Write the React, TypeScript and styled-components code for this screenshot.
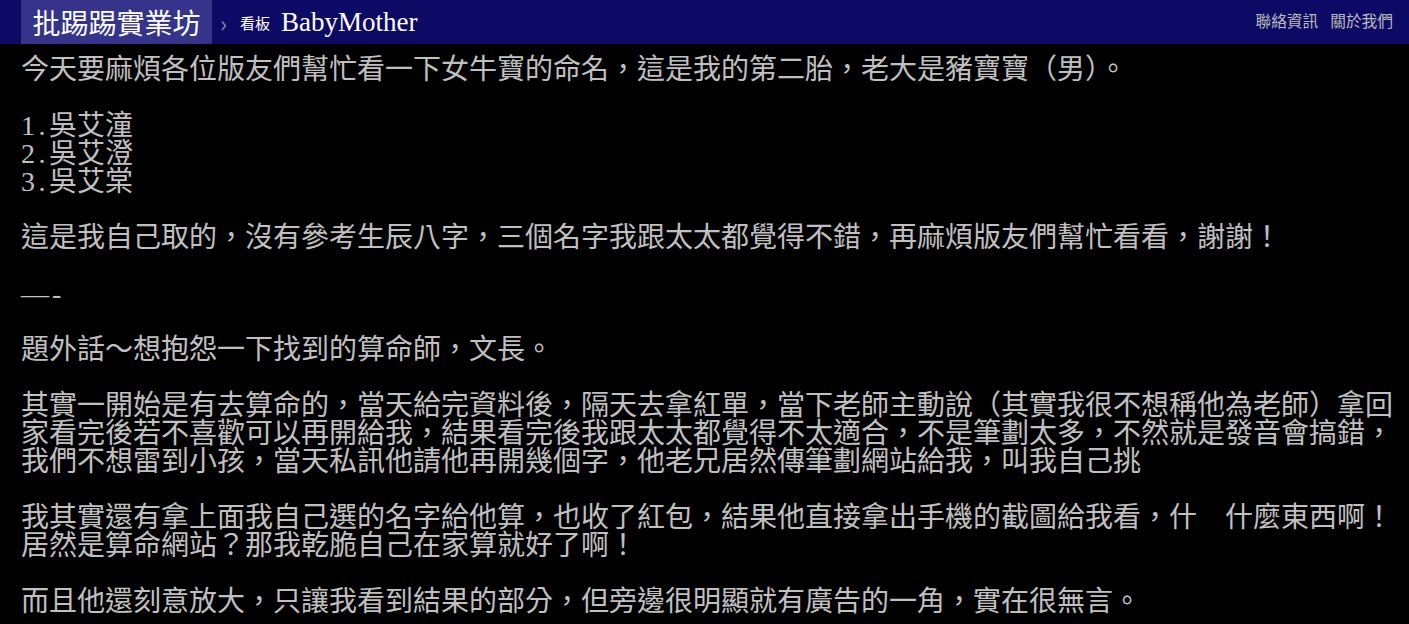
import React from 'react';
import styled, { createGlobalStyle } from 'styled-components';

const GlobalStyle = createGlobalStyle`
  html, body {
    margin: 0;
    padding: 0;
    background: #000;
  }
  body {
    font-family: "Liberation Serif", "Noto Sans CJK TC", serif;
  }
`;

const TopBar = styled.div`
  display: flex;
  align-items: stretch;
  height: 44px;
  background: #0c0a64;
  padding-left: 21px;
  padding-right: 16px;
`;

const Logo = styled.a`
  display: flex;
  align-items: center;
  justify-content: center;
  width: 191px;
  background: #35348a;
  color: #fff;
  font-family: "Noto Sans CJK TC", sans-serif;
  font-size: 28px;
  text-decoration: none;
`;

const Crumbs = styled.div`
  display: flex;
  align-items: center;
  flex: 1;
`;

const Separator = styled.span`
  color: #8a8aa0;
  font-family: "Noto Sans CJK TC", sans-serif;
  font-size: 23px;
  margin: 0 13px 0 8px;
  padding-bottom: 1px;
`;

const BoardLabel = styled.span`
  color: #fff;
  font-family: "Noto Sans CJK TC", sans-serif;
  font-size: 15px;
  margin-right: 11px;
`;

const BoardName = styled.a`
  color: #fff;
  font-family: "Liberation Serif", serif;
  font-size: 27px;
  text-decoration: none;
`;

const Links = styled.div`
  display: flex;
  align-items: center;
  gap: 12px;
  padding-bottom: 4px;
`;

const TopLink = styled.a`
  color: #bbb;
  font-family: "Noto Sans CJK TC", sans-serif;
  font-size: 15.7px;
  text-decoration: none;
`;

const Content = styled.div`
  padding: 12px 21px 0;
  color: #c0c0c0;
  font-family: "Liberation Serif", "Noto Sans CJK TC", serif;
  font-size: 28px;
  line-height: 28px;
`;

const Line = styled.div`
  height: 28px;
  white-space: pre;
`;

// half-width characters take half a cell on the BBS grid
const Half = styled.span<{ $spacing?: number }>`
  letter-spacing: ${(p) => p.$spacing ?? 3.5}px;
`;

type Row = { half?: string; spacing?: number; text: string };

const rows: Row[] = [
  { text: '今天要麻煩各位版友們幫忙看一下女牛寶的命名，這是我的第二胎，老大是豬寶寶（男）。' },
  { text: '' },
  { half: '1.', text: '吳艾潼' },
  { half: '2.', text: '吳艾澄' },
  { half: '3.', text: '吳艾棠' },
  { text: '' },
  { text: '這是我自己取的，沒有參考生辰八字，三個名字我跟太太都覺得不錯，再麻煩版友們幫忙看看，謝謝！' },
  { text: '' },
  { half: '—', spacing: 3, text: '-' },
  { text: '' },
  { text: '題外話～想抱怨一下找到的算命師，文長。' },
  { text: '' },
  { text: '其實一開始是有去算命的，當天給完資料後，隔天去拿紅單，當下老師主動說（其實我很不想稱他為老師）拿回' },
  { text: '家看完後若不喜歡可以再開給我，結果看完後我跟太太都覺得不太適合，不是筆劃太多，不然就是發音會搞錯，' },
  { text: '我們不想雷到小孩，當天私訊他請他再開幾個字，他老兄居然傳筆劃網站給我，叫我自己挑' },
  { text: '' },
  { text: '我其實還有拿上面我自己選的名字給他算，也收了紅包，結果他直接拿出手機的截圖給我看，什　什麼東西啊！' },
  { text: '居然是算命網站？那我乾脆自己在家算就好了啊！' },
  { text: '' },
  { text: '而且他還刻意放大，只讓我看到結果的部分，但旁邊很明顯就有廣告的一角，實在很無言。' },
];

const App: React.FC = () => {
  return (
    <>
      <GlobalStyle />
      <TopBar>
        <Logo href="#">批踢踢實業坊</Logo>
        <Crumbs>
          <Separator>›</Separator>
          <BoardLabel>看板</BoardLabel>
          <BoardName href="#">BabyMother</BoardName>
        </Crumbs>
        <Links>
          <TopLink href="#">聯絡資訊</TopLink>
          <TopLink href="#">關於我們</TopLink>
        </Links>
      </TopBar>
      <Content>
        {rows.map((row, i) => (
          <Line key={i}>
            {row.half && <Half $spacing={row.spacing}>{row.half}</Half>}
            {row.text}
          </Line>
        ))}
      </Content>
    </>
  );
};

export default App;
